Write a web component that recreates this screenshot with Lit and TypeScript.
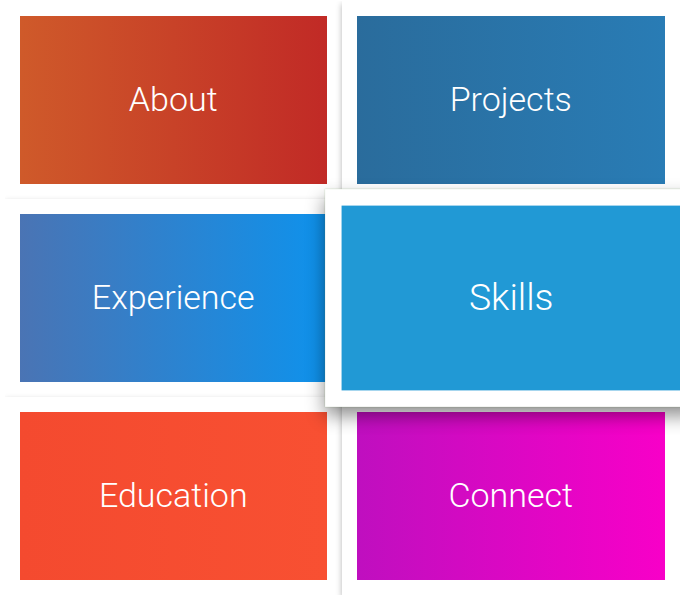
import { LitElement, html, css } from "lit";
import { customElement } from "lit/decorators.js";

const cards = [
  { name: "About", tone: "about" },
  { name: "Projects", tone: "projects" },
  { name: "Experience", tone: "experience" },
  { name: "Skills", tone: "skills" },
  { name: "Education", tone: "education" },
  { name: "Connect", tone: "connect" },
];

@customElement("app-root")
export class AppRoot extends LitElement {
  static styles = css`
    :host { display: block; background: #fff; padding: 1px 12px 0 5px; }
    nav { display: grid; grid-template-columns: calc(50% - 1px) 1fr; overflow: hidden; }
    .card { box-sizing: border-box; height: 198px; padding: 15px; background: #fff; box-shadow: 0 3px 6px rgba(0,0,0,.3); text-decoration: none; }
    .face { box-sizing: border-box; display: flex; align-items: center; justify-content: center; height: 100%; padding-bottom: 2px; color: #fff; font: 300 34px/44px Roboto, sans-serif; }
    .about { background: linear-gradient(90deg, #cf5a2a, #c12a26); }
    .projects { background: linear-gradient(90deg, #2a6c9c, #297cb5); }
    .experience { background: linear-gradient(90deg, #4a74b4, #0e92ec); }
    .skills { background: #2199d5; }
    .education { background: linear-gradient(90deg, #f44a2f, #f85032); }
    .connect { background: linear-gradient(90deg, #bf0fbf, #f800c8); }
    .raised { position: relative; z-index: 1; transform: scale(1.1); box-shadow: 0 8px 16px rgba(0,0,0,.45), 0 0 1px rgba(120,170,90,.5); }
  `;
  render() {
    return html`<nav>${cards.map(c => html`<a class="card ${c.tone === "skills" ? "raised" : ""}" href="#${c.tone}"><span class="face ${c.tone}">${c.name}</span></a>`)}</nav>`;
  }
}
